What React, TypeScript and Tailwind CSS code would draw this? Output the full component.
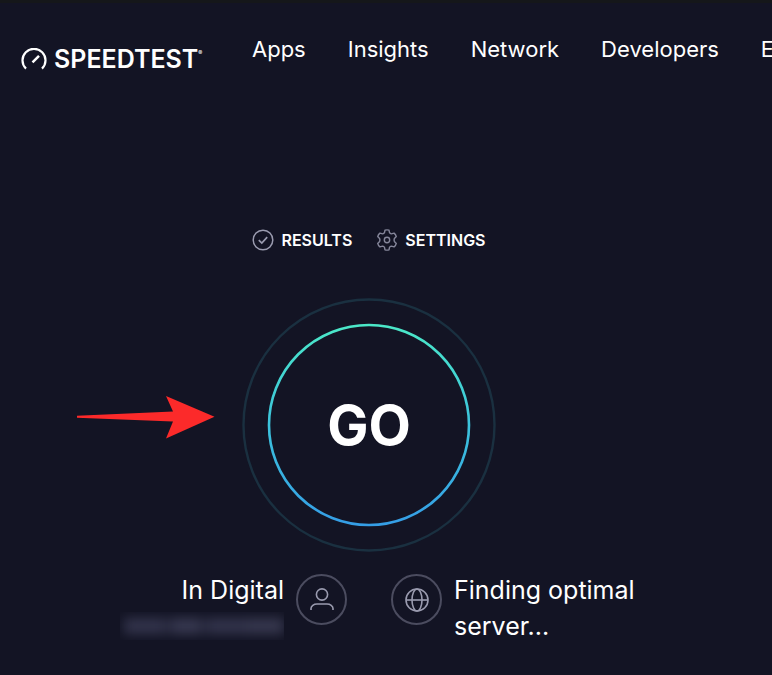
import React, { useState } from 'react';

const navItems = ['Apps', 'Insights', 'Network', 'Developers', 'Enterprise'];

const GaugeIcon = () => (
  <svg className="w-[26px] h-[22px] shrink-0" viewBox="0 0 26 22" fill="none" stroke="#ffffff" strokeWidth="2.2" aria-hidden="true">
    <path d="M5 20.6A11.5 11.5 0 1 1 21 20.6" />
    <path d="M11.5 14.3L18 7.8" strokeWidth="2.5" />
  </svg>
);

const CheckIcon = () => (
  <svg className="w-[22px] h-[22px] shrink-0" viewBox="0 0 22 22" fill="none" stroke="#9a9baf" strokeWidth="1.5" aria-hidden="true">
    <circle cx="11" cy="11" r="9.8" />
    <path d="M6.8 11.2L9.8 14L15.2 8.2" strokeWidth="1.7" />
  </svg>
);

const GearIcon = () => (
  <svg className="w-[22px] h-[22px] shrink-0" viewBox="0 0 22 22" fill="none" stroke="#85869a" strokeWidth="1.4" strokeLinejoin="round" aria-hidden="true">
    <path d="M9 1.2Q11 .5 13 1.2L13.5 3.6Q14 4.8 15.3 4.9L18.1 4.1Q19.8 5.5 20.3 7.6L18.4 9.6Q17.8 11 18.4 12.4L20.3 14.4Q19.8 16.5 18.1 17.9L15.3 17.1Q14 17.2 13.5 18.4L13 20.8Q11 21.5 9 20.8L8.5 18.4Q8 17.2 6.7 17.1L3.9 17.9Q2.2 16.5 1.7 14.4L3.6 12.4Q4.2 11 3.6 9.6L1.7 7.6Q2.2 5.5 3.9 4.1L6.7 4.9Q8 4.8 8.5 3.6Z" />
    <circle cx="11" cy="11" r="2.7" />
  </svg>
);

const UserIcon = () => (
  <svg className="w-6 h-6" viewBox="0 0 24 24" fill="none" stroke="#9a9baf" strokeWidth="1.6" aria-hidden="true">
    <circle cx="12" cy="6.5" r="5.6" />
    <path d="M1 22v-1.4c0-2.6 2.8-4.6 6-4.6h10c3.2 0 6 2 6 4.6v1.4" />
  </svg>
);

const GlobeIcon = () => (
  <svg className="w-6 h-6" viewBox="0 0 24 24" fill="none" stroke="#9a9baf" strokeWidth="1.6" aria-hidden="true">
    <circle cx="12" cy="12" r="11" />
    <ellipse cx="12" cy="12" rx="5" ry="11" />
    <path d="M1 12h22" />
  </svg>
);

const Rings = () => (
  <svg className="col-start-1 row-start-1 w-[254px] h-[254px]" viewBox="0 0 254 254" fill="none" aria-hidden="true">
    <defs>
      <linearGradient id="ring" x1="0" y1="0" x2="0" y2="1">
        <stop offset="0" stopColor="#4be8c8" />
        <stop offset="0.5" stopColor="#3cc3dc" />
        <stop offset="1" stopColor="#359ee6" />
      </linearGradient>
    </defs>
    <circle cx="127" cy="127" r="125.5" stroke="#1a3040" strokeWidth="2.4" />
    <circle cx="127" cy="127" r="100" stroke="url(#ring)" strokeWidth="2.6" />
  </svg>
);

const App: React.FC = () => {
  const [running, setRunning] = useState(false);

  return (
    <div className="min-h-screen overflow-hidden bg-[#131424] border-t-3 border-[#15171a] text-white font-['Inter','Liberation_Sans',sans-serif]">
      <header className="flex items-start pt-[30px] pl-[21px]">
        <a href="#" className="flex items-center gap-[7px] pt-[14px] w-[231px] shrink-0">
          <GaugeIcon />
          <span className="flex items-start text-[25px] leading-6 font-semibold">
            SPEEDTEST
            <span className="text-[6px] leading-3">®</span>
          </span>
        </a>
        <nav className="flex gap-[42px] text-[22px] leading-8 whitespace-nowrap">
          {navItems.map((item) => (
            <a key={item} href="#">{item}</a>
          ))}
        </nav>
      </header>

      <main className="flex flex-col items-center pr-[34px] pt-[157px]">
        <div className="flex gap-6 text-[16px] leading-6 font-semibold">
          <a href="#" className="flex items-center gap-[7px]">
            <CheckIcon />
            RESULTS
          </a>
          <button type="button" className="flex items-center gap-[7px]">
            <GearIcon />
            SETTINGS
          </button>
        </div>

        <div className="relative mt-[46px]">
          <button
            type="button"
            onClick={() => setRunning(!running)}
            aria-pressed={running}
            className="grid place-items-center rounded-full"
          >
            <Rings />
            <span className="col-start-1 row-start-1 text-[55px] leading-none font-bold">GO</span>
          </button>
          <svg className="absolute right-full top-[98px] mr-[27px] w-[139px] h-[44px]" viewBox="0 0 139 44" aria-hidden="true">
            <path d="M1 19.8L97 15.5L90 0L138.5 20.8L90 42.5L97 25.5L1 21.8Z" fill="#fc2a2a" />
          </svg>
        </div>

        <div className="grid grid-cols-2 gap-11 w-full mt-5 pb-8 text-[25px] leading-9">
          <div className="flex justify-end gap-3 text-right">
            <div>
              <p>In Digital</p>
              <div className="flex items-center w-[164px] h-7 mt-1 ml-auto overflow-hidden" aria-hidden="true">
                <div className="flex w-full h-4 pl-1 blur-[6px]">
                  <div className="w-10 bg-[#33344c]" />
                  <div className="w-2 bg-[#28293e]" />
                  <div className="w-7 bg-[#383951]" />
                  <div className="w-2 bg-[#28293e]" />
                  <div className="w-10 bg-[#33344c]" />
                  <div className="grow bg-[#37384f]" />
                </div>
              </div>
            </div>
            <span className="flex items-center justify-center w-[51px] h-[51px] mt-[2px] shrink-0 rounded-full border-2 border-[#4b4c5f]">
              <UserIcon />
            </span>
          </div>
          <div className="flex gap-3">
            <span className="flex items-center justify-center w-[51px] h-[51px] mt-[2px] shrink-0 rounded-full border-2 border-[#4b4c5f]">
              <GlobeIcon />
            </span>
            <p className="max-w-[200px]">Finding optimal server...</p>
          </div>
        </div>
      </main>
    </div>
  );
};

export default App;
